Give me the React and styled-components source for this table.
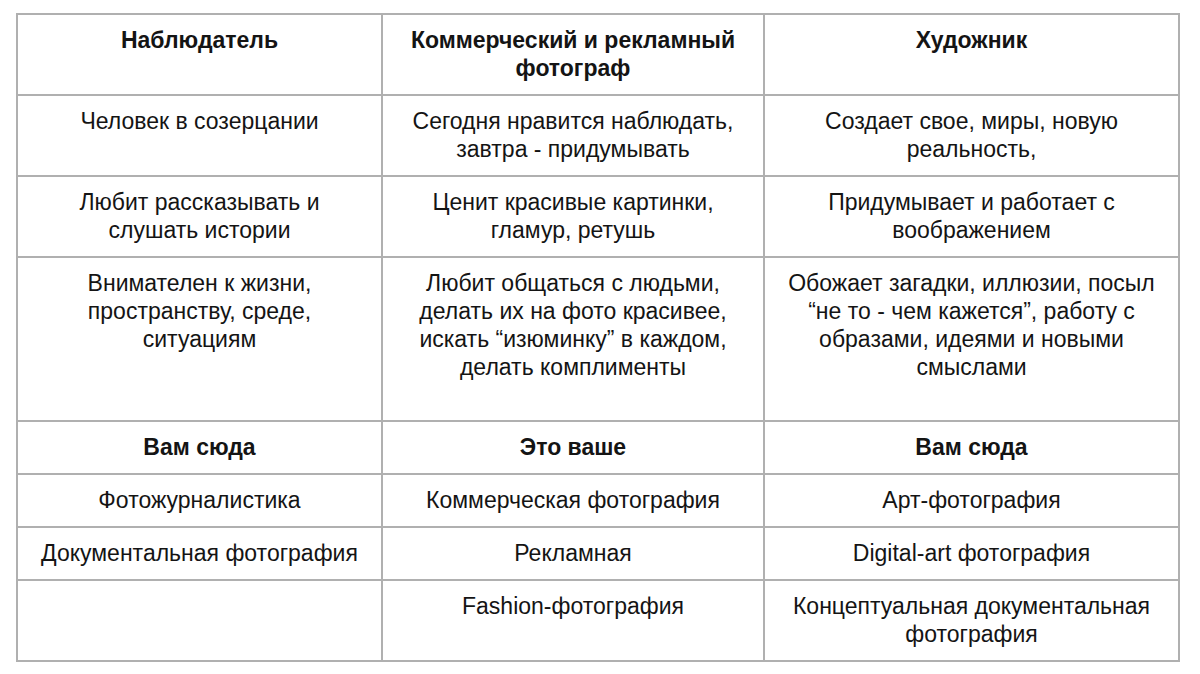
import React from "react";
import styled, { createGlobalStyle } from "styled-components";

const GlobalStyle = createGlobalStyle`
  html, body {
    margin: 0;
    padding: 0;
    background: #ffffff;
  }
  body {
    font-family: "Liberation Sans", Arial, sans-serif;
    color: #141414;
  }
`;

const Page = styled.div`
  padding: 13px 0 0 16px;
  width: 1200px;
  height: 674px;
  box-sizing: border-box;
  overflow: hidden;
`;

const Table = styled.table`
  border-collapse: collapse;
  table-layout: fixed;
  width: 1162px;
`;

const Col = styled.col`
  width: ${(p) => p.$width}px;
`;

const Row = styled.tr`
  height: ${(p) => (p.$height ? `${p.$height}px` : "auto")};
`;

const Cell = styled.td`
  border: 2px solid #b0b0b0;
  padding: 11px 8px 12px;
  vertical-align: top;
  text-align: center;
  font-size: 23px;
  line-height: 28px;
  font-weight: ${(p) => (p.$bold ? 700 : 400)};
`;

const columns = [365, 382, 415];

const rows = [
  { bold: true, height: 81, cells: ["Наблюдатель", "Коммерческий и рекламный\nфотограф", "Художник"] },
  { height: 81, cells: ["Человек в созерцании", "Сегодня нравится наблюдать,\nзавтра - придумывать", "Создает свое, миры, новую\nреальность,"] },
  { height: 81, cells: ["Любит рассказывать и\nслушать истории", "Ценит красивые картинки,\nгламур, ретушь", "Придумывает и работает с\nвоображением"] },
  { height: 164, cells: ["Внимателен к жизни,\nпространству, среде,\nситуациям", "Любит общаться с людьми,\nделать их на фото красивее,\nискать “изюминку” в каждом,\nделать комплименты", "Обожает загадки, иллюзии, посыл\n“не то - чем кажется”, работу с\nобразами, идеями и новыми\nсмыслами"] },
  { bold: true, height: 53, cells: ["Вам сюда", "Это ваше", "Вам сюда"] },
  { height: 53, cells: ["Фотожурналистика", "Коммерческая фотография", "Арт-фотография"] },
  { height: 53, cells: ["Документальная фотография", "Рекламная", "Digital-art фотография"] },
  { height: 79, cells: ["", "Fashion-фотография", "Концептуальная документальная\nфотография"] },
];

function Lines({ text }) {
  const parts = text.split("\n");
  return parts.map((line, i) => (
    <React.Fragment key={i}>
      {line}
      {i < parts.length - 1 && <br />}
    </React.Fragment>
  ));
}

export default function App() {
  return (
    <>
      <GlobalStyle />
      <Page>
        <Table>
          <colgroup>
            {columns.map((w, i) => (
              <Col key={i} $width={w} />
            ))}
          </colgroup>
          <tbody>
            {rows.map((row, i) => (
              <Row key={i} $height={row.height}>
                {row.cells.map((c, j) => (
                  <Cell key={j} $bold={row.bold}>
                    <Lines text={c} />
                  </Cell>
                ))}
              </Row>
            ))}
          </tbody>
        </Table>
      </Page>
    </>
  );
}
